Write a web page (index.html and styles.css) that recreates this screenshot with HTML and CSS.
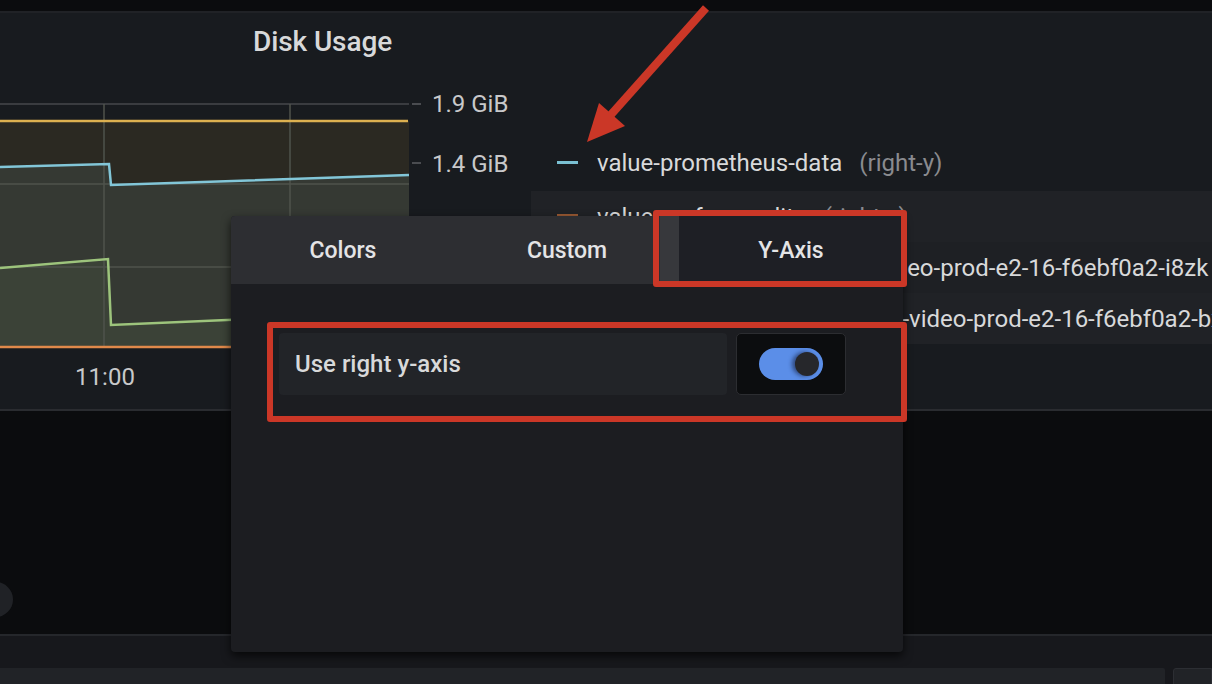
FILE: index.html
```html
<!DOCTYPE html>
<html>
<head>
<meta charset="utf-8">
<link rel="stylesheet" href="styles.css">
</head>
<body>
<div class="topbar"></div>
<section class="panel">
  <h2 class="panel-title">Disk Usage</h2>
  <div class="panel-body">
    <svg class="graph" width="531" height="338" viewBox="0 71 531 338">
      <polygon class="fill-top" points="0,121 409,121 409,175 111,185 109,164 0,167"/>
      <polygon class="fill-mid" points="0,167 109,164 111,185 409,175 409,312 111,325 108,259 0,268"/>
      <polygon class="fill-low" points="0,268 108,259 111,325 409,312 409,347 0,347"/>
      <line class="grid" x1="0" y1="104" x2="409" y2="104"/>
      <line class="grid-in" x1="0" y1="184" x2="409" y2="184"/>
      <line class="grid-in" x1="0" y1="267" x2="409" y2="267"/>
      <line class="grid-in" x1="104" y1="104" x2="104" y2="347"/>
      <line class="grid-in" x1="290" y1="104" x2="290" y2="347"/>
      <line class="tick" x1="412" y1="104" x2="421" y2="104"/>
      <line class="tick" x1="412" y1="163" x2="421" y2="163"/>
      <polyline class="s-yellow" points="0,121 408,121"/>
      <polyline class="s-blue" points="0,167 109,164 111,185 409,175"/>
      <polyline class="s-green" points="0,268 108,259 111,325 409,312"/>
      <polyline class="s-orange" points="0,347 408,347"/>
      <text class="axis" x="432" y="112">1.9 GiB</text>
      <text class="axis" x="432" y="172">1.4 GiB</text>
      <text class="axis" x="105" y="385" text-anchor="middle">11:00</text>
    </svg>
    <div class="legend">
      <div class="legend-row first">
        <span class="dash dash-blue"></span>
        <span class="series-name">value-prometheus-data</span>
        <span class="series-axis">(right-y)</span>
      </div>
      <div class="legend-row alt">
        <span class="dash dash-orange"></span>
        <span class="series-name">value-grafana-sqlite</span>
        <span class="series-axis">(right-y)</span>
      </div>
      <div class="legend-row alt2">
        <span class="dash dash-green"></span>
        <span class="series-name">value-gke-prod-live-lighter-video-prod-e2-16-f6ebf0a2-i8zk</span>
        <span class="series-axis">(right-y)</span>
      </div>
      <div class="legend-row alt">
        <span class="dash dash-yellow"></span>
        <span class="series-name">value-gke-prod-live-w2-heavy-video-prod-e2-16-f6ebf0a2-bx7q</span>
        <span class="series-axis">(right-y)</span>
      </div>
    </div>
  </div>
</section>
<section class="lower">
  <span class="round-btn"></span>
</section>
<div class="footer-strip"></div>
<div class="footer-row">
  <div class="input-bar"></div>
  <div class="input-btn"></div>
</div>

<div class="popover">
  <div class="tabs">
    <div class="tab">Colors</div>
    <div class="tab hover">Custom</div>
    <div class="tab active">Y-Axis</div>
  </div>
  <div class="popover-body">
    <div class="field">
      <label class="field-label">Use right y-axis</label>
      <div class="switch-box">
        <span class="switch"><span class="knob"></span></span>
      </div>
    </div>
  </div>
</div>

<div class="annot annot-tab"></div>
<div class="annot annot-row"></div>
<svg class="arrow" width="140" height="150" viewBox="580 0 140 150">
  <line x1="706" y1="8" x2="608" y2="118" stroke="#cb3727" stroke-width="8"/>
  <polygon points="587,142 599,103 625,126" fill="#cb3727"/>
</svg>
</body>
</html>
```
FILE: styles.css
```css
* { box-sizing: border-box; }
html, body { margin: 0; padding: 0; }
body {
  width: 1212px;
  height: 684px;
  overflow: hidden;
  background: #0b0c0e;
  font-family: Roboto, "Liberation Sans", sans-serif;
  color: #d8d9da;
  position: relative;
}
.topbar {
  height: 13px;
  background: #0b0c0e;
  border-bottom: 2px solid #202226;
}
.panel {
  height: 398px;
  background: #181b1f;
  border-bottom: 2px solid #2a2c30;
}
.panel-title {
  margin: 0;
  height: 58px;
  line-height: 58px;
  padding-left: 253px;
  font-size: 28px;
  font-weight: 500;
  color: #d8d9da;
  letter-spacing: -0.1px;
}
.panel-body {
  display: flex;
  height: 338px;
}
.graph { display: block; flex: none; }
.fill-top { fill: #2b2922; }
.fill-mid { fill: #353933; }
.fill-low { fill: #3b4237; }
.grid { stroke: #3a3c40; stroke-width: 2; }
.grid-in { stroke: #4f534d; stroke-width: 1.5; }
.tick { stroke: #4a4c50; stroke-width: 2; }
.s-yellow { stroke: #dcb050; stroke-width: 2.5; fill: none; }
.s-blue { stroke: #82c6d8; stroke-width: 2.5; fill: none; }
.s-green { stroke: #9dc47c; stroke-width: 2.5; fill: none; }
.s-orange { stroke: #e0894a; stroke-width: 2.5; fill: none; }
.axis {
  font-family: Roboto, "Liberation Sans", sans-serif;
  font-size: 24px;
  fill: #c8c9ca;
}
.legend {
  flex: 1;
  min-width: 0;
  padding-top: 67px;
  overflow: hidden;
}
.legend-row {
  height: 51px;
  display: flex;
  align-items: center;
  padding-left: 26px;
  white-space: nowrap;
  font-size: 24px;
  color: #d8d9da;
}
.legend-row.first {
  height: 53px;
  padding-bottom: 4px;
}
.legend-row.alt { background: #202226; }
.legend-row.alt2 { background: #1e2024; }
.dash {
  width: 21px;
  height: 3px;
  margin-right: 19px;
  flex: none;
}
.dash-blue { background: #7ac0d2; }
.dash-orange { background: #9a5a34; height: 6px; }
.dash-green { background: #9dc47c; }
.dash-yellow { background: #dcb050; }
.series-axis {
  color: #8a8b8f;
  margin-left: 17px;
}
.lower {
  height: 225px;
  background: #0b0c0e;
  border-bottom: 2px solid #25272b;
  position: relative;
  overflow: hidden;
}
.round-btn {
  position: absolute;
  left: -22px;
  top: 171px;
  width: 35px;
  height: 35px;
  border-radius: 50%;
  background: #202226;
}
.footer-strip {
  height: 32px;
  background: #17181c;
}
.footer-row {
  display: flex;
  gap: 8px;
  height: 20px;
  background: #17181c;
}
.input-bar {
  width: 1165px;
  background: #212327;
  border-radius: 0 2px 0 0;
}
.input-btn {
  flex: 1;
  background: #212327;
  border: 1px solid #2c2e33;
  border-radius: 3px 0 0 0;
}
.popover {
  position: absolute;
  left: 231px;
  top: 216px;
  width: 672px;
  height: 436px;
  background: #1c1d21;
  border-radius: 4px;
  box-shadow: 0 4px 10px rgba(0,0,0,0.7);
  overflow: hidden;
}
.tabs {
  display: flex;
  height: 68px;
  background: #2d2e32;
}
.tab {
  flex: 1 1 0;
  display: flex;
  align-items: center;
  justify-content: center;
  font-size: 23px;
  font-weight: 500;
  color: #e4e4e6;
}
.tab.hover {
  box-shadow: inset -19px 0 0 #37383c;
}
.tab.active {
  background: #1e1f25;
}
.popover-body {
  padding: 49px 0 0 48px;
}
.field {
  display: flex;
  gap: 9px;
  height: 62px;
}
.field-label {
  width: 448px;
  background: #222428;
  border-radius: 4px;
  display: flex;
  align-items: center;
  padding-left: 16px;
  font-size: 24px;
  font-weight: 500;
  color: #d8d9da;
}
.switch-box {
  width: 110px;
  background: #0c0d0f;
  border: 1.5px solid #2c2d31;
  border-radius: 5px;
  display: flex;
  align-items: center;
  justify-content: center;
}
.switch {
  width: 64px;
  height: 32px;
  border-radius: 16px;
  background: #5b8ee8;
  position: relative;
}
.knob {
  position: absolute;
  right: 4px;
  top: 4px;
  width: 24px;
  height: 24px;
  border-radius: 50%;
  background: #26272b;
  box-shadow: -3px 0 4px rgba(20,30,60,0.6);
}
.annot {
  position: absolute;
  border: 6.5px solid #cb3727;
  border-radius: 3px;
}
.annot-tab {
  left: 653px;
  top: 210px;
  width: 254px;
  height: 77px;
}
.annot-row {
  left: 267px;
  top: 322px;
  width: 640px;
  height: 100px;
}
.arrow {
  position: absolute;
  left: 580px;
  top: 0;
}
```
